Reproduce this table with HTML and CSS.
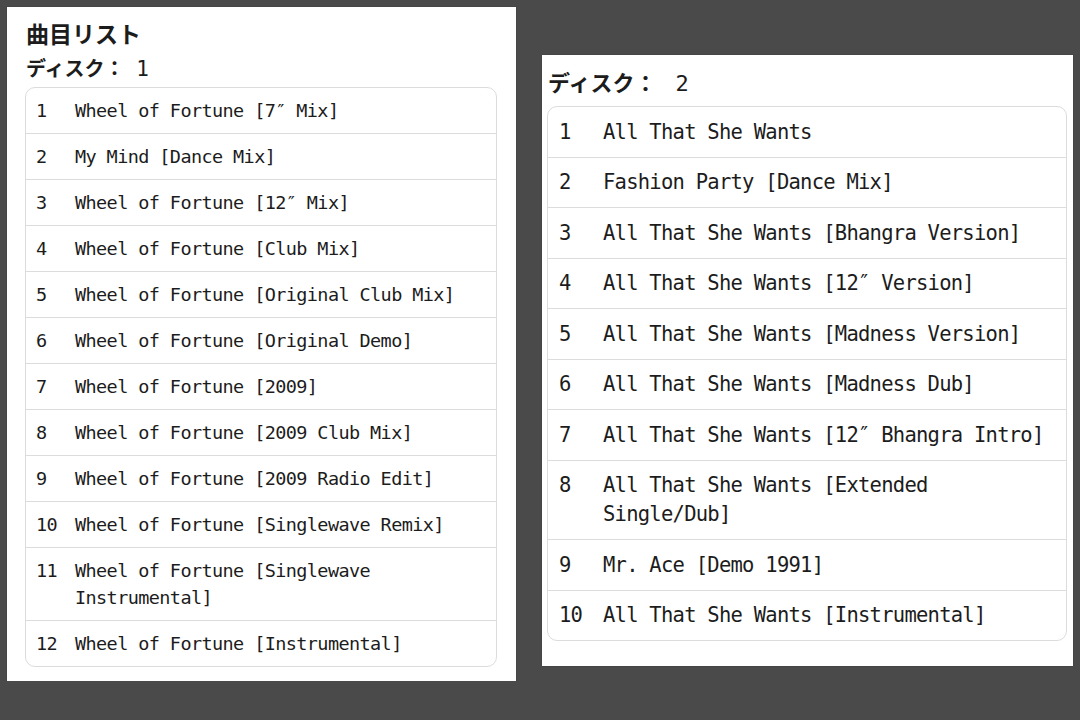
FILE: index.html
```html
<!DOCTYPE html>
<html lang="ja">
<head>
<meta charset="utf-8">
<link rel="stylesheet" href="styles.css">
</head>
<body>
<div class="page">
  <section class="panel panel-left">
    <h1 class="title">曲目リスト</h1>
    <h2 class="disc">ディスク： <span class="num">1</span></h2>
    <ol class="tracks">
      <li class="track"><span class="no">1</span><span class="name">Wheel of Fortune [7″ Mix]</span></li>
      <li class="track"><span class="no">2</span><span class="name">My Mind [Dance Mix]</span></li>
      <li class="track"><span class="no">3</span><span class="name">Wheel of Fortune [12″ Mix]</span></li>
      <li class="track"><span class="no">4</span><span class="name">Wheel of Fortune [Club Mix]</span></li>
      <li class="track"><span class="no">5</span><span class="name">Wheel of Fortune [Original Club Mix]</span></li>
      <li class="track"><span class="no">6</span><span class="name">Wheel of Fortune [Original Demo]</span></li>
      <li class="track"><span class="no">7</span><span class="name">Wheel of Fortune [2009]</span></li>
      <li class="track"><span class="no">8</span><span class="name">Wheel of Fortune [2009 Club Mix]</span></li>
      <li class="track"><span class="no">9</span><span class="name">Wheel of Fortune [2009 Radio Edit]</span></li>
      <li class="track"><span class="no">10</span><span class="name">Wheel of Fortune [Singlewave Remix]</span></li>
      <li class="track"><span class="no">11</span><span class="name">Wheel of Fortune [Singlewave Instrumental]</span></li>
      <li class="track"><span class="no">12</span><span class="name">Wheel of Fortune [Instrumental]</span></li>
    </ol>
  </section>
  <section class="panel panel-right">
    <h2 class="disc">ディスク： <span class="num">2</span></h2>
    <ol class="tracks">
      <li class="track"><span class="no">1</span><span class="name">All That She Wants</span></li>
      <li class="track"><span class="no">2</span><span class="name">Fashion Party [Dance Mix]</span></li>
      <li class="track"><span class="no">3</span><span class="name">All That She Wants [Bhangra Version]</span></li>
      <li class="track"><span class="no">4</span><span class="name">All That She Wants [12″ Version]</span></li>
      <li class="track"><span class="no">5</span><span class="name">All That She Wants [Madness Version]</span></li>
      <li class="track"><span class="no">6</span><span class="name">All That She Wants [Madness Dub]</span></li>
      <li class="track"><span class="no">7</span><span class="name">All That She Wants [12″ Bhangra Intro]</span></li>
      <li class="track"><span class="no">8</span><span class="name">All That She Wants [Extended Single/Dub]</span></li>
      <li class="track"><span class="no">9</span><span class="name">Mr. Ace [Demo 1991]</span></li>
      <li class="track"><span class="no">10</span><span class="name">All That She Wants [Instrumental]</span></li>
    </ol>
  </section>
</div>
</body>
</html>
```
FILE: styles.css
```css
html, body {
  margin: 0;
  padding: 0;
  background: #4a4a4a;
}
.page {
  display: flex;
  align-items: flex-start;
  gap: 26px;
  padding: 7px 0 0 7px;
  color: #1c1c1c;
}
.panel {
  background: #ffffff;
  box-sizing: border-box;
  box-shadow: 0 0 1px rgba(0,0,0,0.4);
}
.panel-left {
  width: 509px;
  height: 674px;
  padding: 12px 19px 15px 18px;
}
.panel-right {
  width: 531px;
  height: 611px;
  margin-top: 48px;
  padding: 12px 6px 25px 5px;
}
.title {
  margin: 0;
  font-family: "Noto Sans CJK JP", "DejaVu Sans", sans-serif;
  font-weight: 700;
  font-size: 23px;
  line-height: 28px;
  padding-left: 1px;
}
.disc {
  margin: 8px 0 0 0;
  font-family: "Noto Sans CJK JP", "DejaVu Sans", sans-serif;
  font-weight: 700;
  font-size: 20px;
  line-height: 26px;
  padding-left: 1px;
}
.disc .num {
  font-family: "DejaVu Sans Mono", monospace;
  font-weight: 400;
  font-size: 21px;
  margin-left: 7px;
}
.panel-right .disc {
  margin: 0;
  font-size: 22px;
  line-height: 28px;
}
.panel-right .disc .num {
  font-size: 22px;
  margin-left: 14px;
}
.tracks {
  list-style: none;
  margin: 5px 0 0 0;
  padding: 0;
  border: 1px solid #dcdcdc;
  border-radius: 10px;
}
.panel-right .tracks {
  margin-top: 8px;
}
.track {
  display: grid;
  grid-template-columns: 39px 1fr;
  padding: 9px 10px 9px 10px;
  font-family: "DejaVu Sans Mono", "Liberation Mono", monospace;
  font-size: 18.5px;
  letter-spacing: -0.6px;
  line-height: 27px;
  border-top: 1px solid #dcdcdc;
}
.track:first-child {
  border-top: none;
}
.panel-right .track {
  grid-template-columns: 44px 1fr;
  padding: 10.5px 10px 10px 11px;
  font-size: 20.5px;
  letter-spacing: -0.75px;
  line-height: 29px;
}
.no {
  display: block;
}
.name {
  display: block;
}
```
